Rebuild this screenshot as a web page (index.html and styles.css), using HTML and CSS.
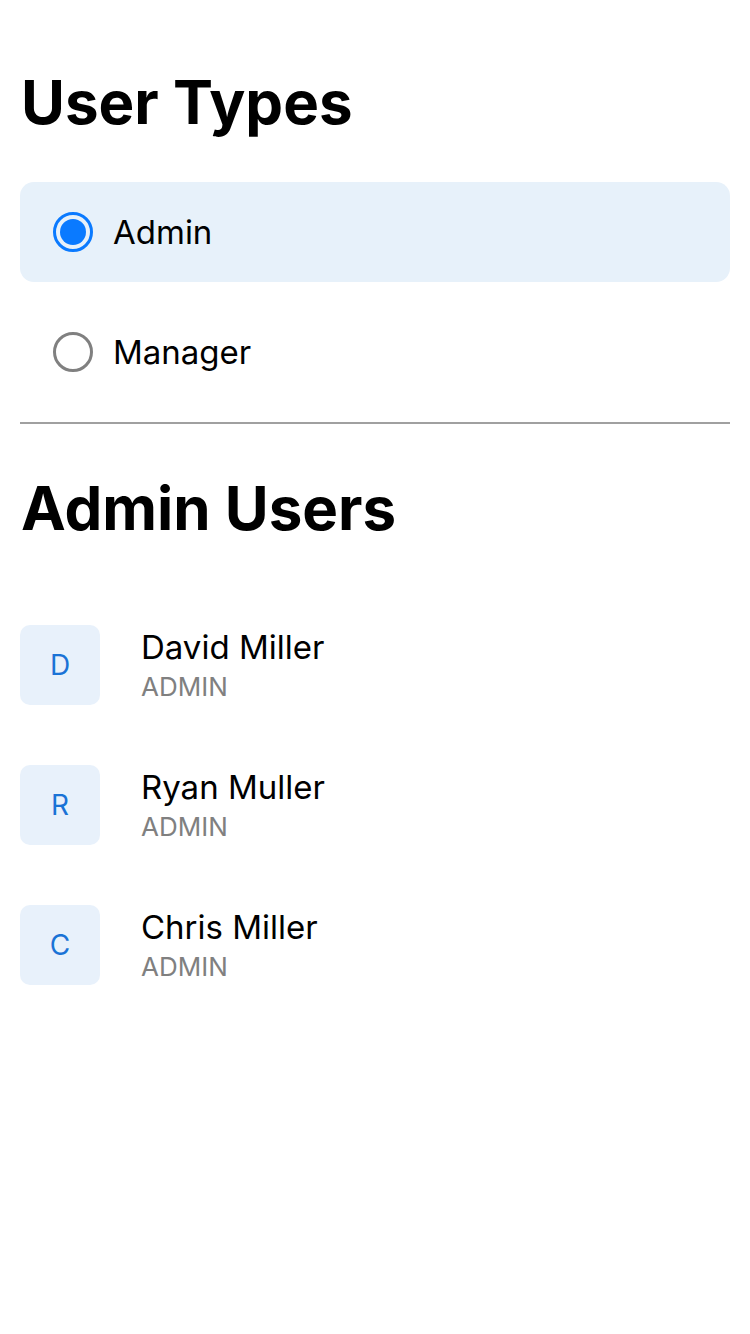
FILE: index.html
```html
<!DOCTYPE html>
<html>
<head>
<meta charset="utf-8">
<link rel="stylesheet" href="styles.css">
</head>
<body>
<div class="page">
  <h1 class="title">User Types</h1>
  <div class="options">
    <div class="option selected">
      <span class="radio on"><span class="dot"></span></span>
      <span class="label">Admin</span>
    </div>
    <div class="option">
      <span class="radio"></span>
      <span class="label">Manager</span>
    </div>
  </div>
  <div class="divider"></div>
  <h2 class="title second">Admin Users</h2>
  <div class="users">
    <div class="user">
      <div class="avatar">D</div>
      <div class="info"><div class="name">David Miller</div><div class="role">ADMIN</div></div>
    </div>
    <div class="user">
      <div class="avatar">R</div>
      <div class="info"><div class="name">Ryan Muller</div><div class="role">ADMIN</div></div>
    </div>
    <div class="user">
      <div class="avatar">C</div>
      <div class="info"><div class="name">Chris Miller</div><div class="role">ADMIN</div></div>
    </div>
  </div>
</div>
</body>
</html>
```
FILE: styles.css
```css
html, body { margin: 0; padding: 0; background: #fff; }
body { font-family: Inter, "Liberation Sans", sans-serif; color: #000; }
.page { padding: 60px 20px 0 20px; }
.title { margin: 0; font-size: 60px; font-weight: 700; line-height: 84px; letter-spacing: 0; padding-left: 1px; }
.options { margin-top: 38px; display: flex; flex-direction: column; gap: 20px; }
.option { height: 100px; border-radius: 14px; display: flex; align-items: center; padding-left: 33px; gap: 20px; }
.option.selected { background: #e7f1fa; }
.radio { border: 3px solid #808080; border-radius: 50%; display: flex; align-items: center; justify-content: center; box-sizing: content-box; width: 34px; height: 34px; }
.radio.on { border-color: #0a7aff; }
.dot { width: 26px; height: 26px; border-radius: 50%; background: #0a7aff; }
.label { font-size: 33px; font-weight: 400; }
.divider { margin-top: 20px; height: 2px; background: #a0a0a0; }
.second { margin-top: 42px; }
.users { margin-top: 75px; display: flex; flex-direction: column; gap: 60px; }
.user { display: flex; align-items: center; gap: 41px; }
.avatar { width: 80px; height: 80px; border-radius: 10px; background: #e8f1fb; color: #1a73d6; font-size: 28px; display: flex; align-items: center; justify-content: center; }
.info { display: flex; flex-direction: column; }
.name { font-size: 33px; line-height: 44px; }
.role { font-size: 26px; line-height: 36px; color: #808080; }
```
